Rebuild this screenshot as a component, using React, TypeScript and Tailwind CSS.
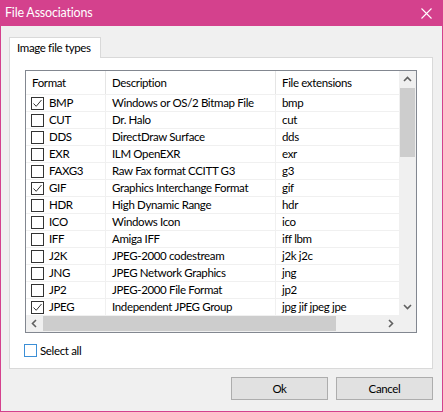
import React from 'react'

const rows = [
  { fmt: 'BMP',   desc: 'Windows or OS/2 Bitmap File', ext: 'bmp',              on: true  },
  { fmt: 'CUT',   desc: 'Dr. Halo',                    ext: 'cut',              on: false },
  { fmt: 'DDS',   desc: 'DirectDraw Surface',          ext: 'dds',              on: false },
  { fmt: 'EXR',   desc: 'ILM OpenEXR',                 ext: 'exr',              on: false },
  { fmt: 'FAXG3', desc: 'Raw Fax format CCITT G3',     ext: 'g3',               on: false },
  { fmt: 'GIF',   desc: 'Graphics Interchange Format', ext: 'gif',              on: true  },
  { fmt: 'HDR',   desc: 'High Dynamic Range',          ext: 'hdr',              on: false },
  { fmt: 'ICO',   desc: 'Windows Icon',                ext: 'ico',              on: false },
  { fmt: 'IFF',   desc: 'Amiga IFF',                   ext: 'iff lbm',          on: false },
  { fmt: 'J2K',   desc: 'JPEG-2000 codestream',        ext: 'j2k j2c',          on: false },
  { fmt: 'JNG',   desc: 'JPEG Network Graphics',       ext: 'jng',              on: false },
  { fmt: 'JP2',   desc: 'JPEG-2000 File Format',       ext: 'jp2',              on: false },
  { fmt: 'JPEG',  desc: 'Independent JPEG Group',      ext: 'jpg jif jpeg jpe', on: true  },
]

function Check({ on, blue }: { on?: boolean; blue?: boolean }) {
  return (
    <span className={`w-[13px] h-[13px] shrink-0 bg-white border flex items-center justify-center ${blue ? 'border-[#3c8fd6]' : 'border-[#333]'}`}>
      {on && (
        <svg width="11" height="11" viewBox="0 0 11 11">
          <path d="M1.5 5.5 L4.2 8.3 L9.5 2" fill="none" stroke="#333" strokeWidth="1" />
        </svg>
      )}
    </span>
  )
}

function Chevron({ dir }: { dir: 'up' | 'down' | 'left' | 'right' }) {
  const d = {
    up: 'M1 6 L4.5 2.5 L8 6',
    down: 'M1 3 L4.5 6.5 L8 3',
    left: 'M6 1 L2.5 4.5 L6 8',
    right: 'M3 1 L6.5 4.5 L3 8',
  }[dir]
  return (
    <svg width="9" height="9" viewBox="0 0 9 9">
      <path d={d} fill="none" stroke="#606060" strokeWidth="1.6" />
    </svg>
  )
}

export default function App() {
  return (
    <div
      className="w-[443px] h-[412px] bg-[#d4418d] flex flex-col px-px pb-px text-[11.5px] tracking-[-0.35px] text-black"
      style={{ fontFamily: '"Segoe UI", Lato, "Noto Sans", sans-serif' }}
    >
      {/* ── Title bar ───────────────────────────────────── */}
      <div className="h-[26px] flex items-center justify-between pl-[4px] pr-[10px] text-white text-[12.5px] tracking-[-0.2px] shrink-0">
        <span>File Associations</span>
        <svg width="11" height="11" viewBox="0 0 11 11">
          <path d="M0.5 0.5 L10.5 10.5 M10.5 0.5 L0.5 10.5" stroke="#fff" strokeWidth="1.1" />
        </svg>
      </div>

      {/* ── Body ────────────────────────────────────────── */}
      <div className="flex-1 bg-[#f0f0f0] flex flex-col pl-[8px] pr-[9px] pt-[11px]">
        {/* Tab strip */}
        <div className="flex">
          <div className="w-[92px] h-[21px] bg-white border border-b-0 border-[#d9d9d9] flex items-center pl-[7px] -mb-px relative z-10 whitespace-nowrap">
            Image file types
          </div>
        </div>

        {/* Tab panel */}
        <div className="h-[312px] bg-white border border-[#d9d9d9] pl-[15px] pt-[12px] flex flex-col">
          {/* List view */}
          <div className="w-[392px] h-[263px] border border-[#828790] flex flex-col bg-white">
            <div className="flex flex-1 min-h-0">
              <div className="flex-1 min-w-0 overflow-hidden">
                {/* Header */}
                <div className="flex h-[23px] items-center">
                  <div className="w-[80px] h-full flex items-center pl-[6px] border-r border-[#e5e5e5]">Format</div>
                  <div className="w-[170px] h-full flex items-center pl-[6px] border-r border-[#e5e5e5]">Description</div>
                  <div className="w-[122px] h-full flex items-center pl-[6px] whitespace-nowrap">File extensions</div>
                </div>
                {/* Rows */}
                {rows.map(r => (
                  <div key={r.fmt} className="flex h-[17px] items-center border-t border-[#f0f0f0]">
                    <div className="w-[80px] h-full flex items-center gap-[5px] pl-[5px] border-r border-[#f0f0f0]">
                      <Check on={r.on} />
                      <span>{r.fmt}</span>
                    </div>
                    <div className="w-[170px] h-full flex items-center pl-[6px] border-r border-[#f0f0f0] whitespace-nowrap">{r.desc}</div>
                    <div className="w-[122px] h-full flex items-center pl-[6px] whitespace-nowrap">{r.ext}</div>
                  </div>
                ))}
              </div>
              {/* Vertical scrollbar */}
              <div className="w-[17px] bg-[#f0f0f0] flex flex-col items-center shrink-0">
                <div className="h-[17px] flex items-center justify-center"><Chevron dir="up" /></div>
                <div className="w-[15px] h-[69px] bg-[#cdcdcd]" />
                <div className="flex-1" />
                <div className="h-[17px] flex items-center justify-center"><Chevron dir="down" /></div>
              </div>
            </div>
            {/* Horizontal scrollbar */}
            <div className="h-[17px] flex shrink-0">
              <div className="flex-1 bg-[#f0f0f0] flex items-center">
                <div className="w-[17px] flex items-center justify-center"><Chevron dir="left" /></div>
                <div className="w-[293px] h-[15px] bg-[#cdcdcd]" />
                <div className="flex-1" />
                <div className="w-[17px] flex items-center justify-center"><Chevron dir="right" /></div>
              </div>
              <div className="w-[17px] bg-[#f0f0f0]" />
            </div>
          </div>

          {/* Select all */}
          <div className="flex items-center gap-[3px] mt-[9px] -ml-px">
            <Check blue />
            <span>Select all</span>
          </div>
        </div>

        {/* Buttons */}
        <div className="flex justify-end gap-[8px] mt-[8px]">
          <button className="w-[97px] h-[23px] bg-[#e1e1e1] border border-[#adadad] flex items-center justify-center">Ok</button>
          <button className="w-[97px] h-[23px] bg-[#e1e1e1] border border-[#adadad] flex items-center justify-center">Cancel</button>
        </div>
      </div>
    </div>
  )
}
